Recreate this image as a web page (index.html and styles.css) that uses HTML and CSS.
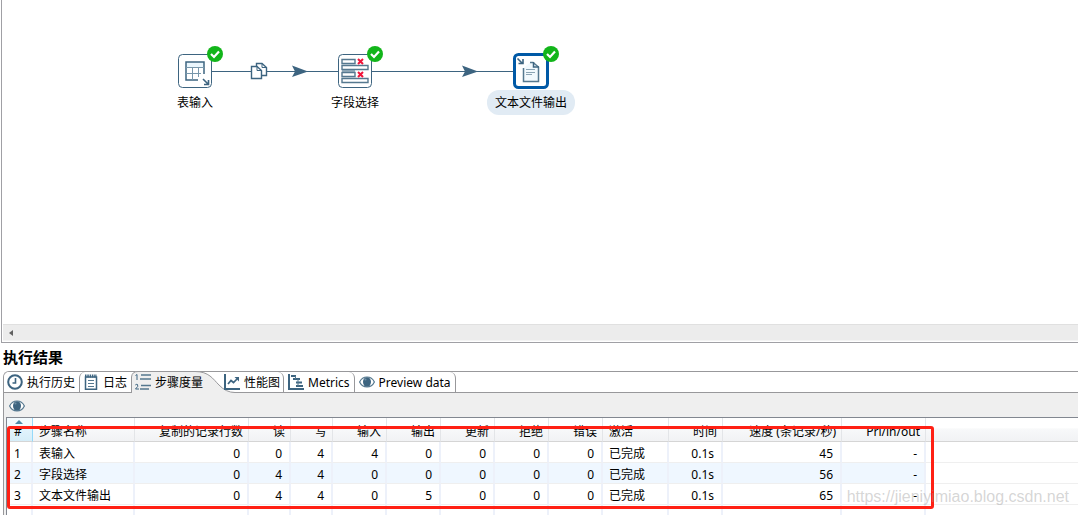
FILE: index.html
```html
<!DOCTYPE html>
<html lang="zh-CN">
<head>
<meta charset="utf-8">
<title>执行结果</title>
<link rel="stylesheet" href="styles.css">
</head>
<body>
<main class="canvas">
  <div class="stage">
    <svg class="hops" width="600" height="120" viewBox="0 0 600 120" aria-hidden="true">
      <path d="M212 71.500H338M372 71.500H514" fill="none" stroke="#3d6480"/>
      <path d="M292 65.500L308 71.500L292 77L295 71.500ZM462 65.500L478 71.500L462 77L465 71.500Z" fill="#3d6480"/>
      <path d="M256.500 63.500H262L266.500 67.500V75.500H256.500Z" fill="#fff" stroke="#3d6480" stroke-width="1.400"/>
      <path d="M251.500 66.500H257L261.500 70.500V78.500H251.500Z" fill="#fff" stroke="#3d6480" stroke-width="1.400"/>
      <path d="M257 66.500V70.500H261.500M262 63.500V67.500H266.500" fill="none" stroke="#3d6480"/>
    </svg>

    <div class="node node-input">
      <svg class="node-icon" viewBox="0 0 36 36">
        <rect x="1.500" y="1.500" width="33" height="33" rx="4" fill="#fff" stroke="#3d6480"/>
        <path d="M9 9H27V14H9Z" fill="#eaf6fd"/>
        <path d="M21 27H9V9H27V21" fill="none" stroke="#3d6480" stroke-width="1.500"/>
        <path d="M9 14.500H27M9 20.500H24M15.500 14V27M21.500 14V24" fill="none" stroke="#7897ab"/>
        <path d="M26 26L31 31M31.500 27V31.500H27" fill="none" stroke="#3d6480" stroke-width="1.600"/>
      </svg>
      <svg class="node-ok" viewBox="0 0 16 16"><circle cx="8" cy="8" r="8" fill="#12b51a"/><path d="M4 8L7 11L12 5.500" fill="none" stroke="#fff" stroke-width="2.200"/></svg>
      <span class="node-label">表输入</span>
    </div>

    <div class="node node-select">
      <svg class="node-icon" viewBox="0 0 36 36">
        <rect x="1.500" y="1.500" width="33" height="33" rx="4" fill="#fff" stroke="#3d6480"/>
        <path d="M5 6.500H18V10.500H5ZM5 12.500H31V16.500H5ZM5 19.500H18V23.500H5ZM5 25.500H31V29.500H5Z" fill="#fff" stroke="#55788f" stroke-width="1.400"/>
        <path d="M5 18H18" stroke="#8ba4b4" stroke-width="2"/>
        <path d="M21 6L26 11M26 6L21 11M21 19L26 24M26 19L21 24" stroke="#f0143a" stroke-width="2"/>
      </svg>
      <svg class="node-ok" viewBox="0 0 16 16"><circle cx="8" cy="8" r="8" fill="#12b51a"/><path d="M4 8L7 11L12 5.500" fill="none" stroke="#fff" stroke-width="2.200"/></svg>
      <span class="node-label">字段选择</span>
    </div>

    <div class="node node-output">
      <svg class="node-icon" viewBox="0 0 36 36">
        <rect x="1.500" y="1.500" width="33" height="33" rx="4" fill="#fff" stroke="#0059a6" stroke-width="3"/>
        <path d="M10.500 15V28.500H25.500V14L20 9.500H17" fill="#f2f9fd" stroke="#55788f" stroke-width="1.500"/>
        <path d="M20.500 9V14H26" fill="none" stroke="#3d6480" stroke-width="1.500"/>
        <path d="M13 16.500H22M13 19.500H22M13 21.500H19" stroke="#8ba4b4"/>
        <path d="M4.500 5.500L9 10M10 6V10.500H5.500" fill="none" stroke="#3d6480" stroke-width="1.600"/>
      </svg>
      <svg class="node-ok" viewBox="0 0 16 16"><circle cx="8" cy="8" r="8" fill="#12b51a"/><path d="M4 8L7 11L12 5.500" fill="none" stroke="#fff" stroke-width="2.200"/></svg>
      <span class="node-label node-label-active">文本文件输出</span>
    </div>
  </div>
  <div class="scrollbar">
    <button class="scroll-left" type="button" aria-label="向左滚动"><svg width="4" height="6" viewBox="0 0 4 6"><path d="M4 0V6L0 3Z" fill="#606060"/></svg></button>
  </div>
</main>

<section class="results">
  <h1 class="results-title">执行结果</h1>
  <div class="panel">
    <div class="tabs" role="tablist">
      <button class="tab tab-history" role="tab" type="button">
        <svg class="icon" viewBox="0 0 16 16"><circle cx="8" cy="8" r="6.800" fill="none" stroke="#3d6480" stroke-width="2"/><path d="M8.500 4V9H5.500" fill="none" stroke="#3d6480" stroke-width="1.600"/></svg><span class="tab-text">执行历史</span></button>
      <button class="tab tab-log" role="tab" type="button">
        <svg class="icon" viewBox="0 0 16 16"><path d="M2.500 3H13.500V15.200H2.500Z" fill="#fff" stroke="#3d6480" stroke-width="1.500"/><path d="M2 2H14" stroke="#3d6480" stroke-width="3" stroke-dasharray="1.500 .8"/><path d="M5 6.500H11M5 9.500H11M5 12.500H11" stroke="#55788f" stroke-width="1.200"/></svg><span class="tab-text">日志</span></button>
      <button class="tab tab-metrics" role="tab" type="button" aria-selected="true">
        <svg class="tab-shape" width="104" height="22" viewBox="0 0 104 22"><path d="M.5 22V6Q1 .5 7 .5H64C78 .5 82 8 88 14Q95 21.500 104 21.500V22Z" fill="#efefef"/><path d="M.5 22V6Q1 .5 7 .5H64C78 .5 82 8 88 14Q95 21.500 104 21.500" fill="none" stroke="#98989b"/></svg>
        <svg class="icon" viewBox="0 0 16 16"><path d="M.5 1.500L2 .5V6M.3 11Q1 10 2.500 10.500Q4 12 .5 15H4" fill="none" stroke="#3d6480"/><path d="M6 1H16M5 5H16M6 11.500H16M5 15H14" stroke="#55788f" stroke-width="1.400"/></svg><span class="tab-text">步骤度量</span></button>
      <button class="tab tab-perf" role="tab" type="button">
        <svg class="icon" viewBox="0 0 16 16"><path d="M1 0V15H16" fill="none" stroke="#3d6480" stroke-width="2"/><path d="M4 10L7 6.500L9.500 8.500L13 5" fill="none" stroke="#3d6480" stroke-width="1.700"/><path d="M10.500 3H15V7.500Z" fill="#3d6480"/></svg><span class="tab-text">性能图</span></button>
      <button class="tab tab-gantt" role="tab" type="button">
        <svg class="icon" viewBox="0 0 16 16"><path d="M1 0V15H16" fill="none" stroke="#3d6480" stroke-width="2"/><path d="M3 2H8M5 5H12M8 8.500H14M8 12H15" stroke="#3d6480" stroke-width="2"/><path d="M7.500 2V5M10 5V12" stroke="#55788f"/></svg><span class="tab-text">Metrics</span></button>
      <button class="tab tab-preview" role="tab" type="button">
        <svg class="icon" viewBox="0 0 16 16"><path d="M.6 8Q3 3 8 3T15.400 8Q13 13 8 13T.6 8Z" fill="#fff" stroke="#55788f" stroke-width="1.200"/><ellipse cx="8" cy="8" rx="4" ry="4.800" fill="#3d6480"/><circle cx="6.500" cy="5.500" r="1" fill="#6f8fa4"/></svg><span class="tab-text">Preview data</span></button>
    </div>
    <div class="toolbar">
      <button class="tool" type="button" aria-label="Preview"><svg class="icon" viewBox="0 0 16 16"><path d="M.6 8Q3 3 8 3T15.400 8Q13 13 8 13T.6 8Z" fill="#fff" stroke="#55788f" stroke-width="1.200"/><ellipse cx="8" cy="8" rx="4" ry="4.800" fill="#3d6480"/><circle cx="6.500" cy="5.500" r="1" fill="#6f8fa4"/></svg></button>
    </div>
    <div class="grid">
      <table class="steps">
        <colgroup><col class="w-index"><col class="w-name"><col class="w-copy"><col class="w-small"><col class="w-small"><col class="w-mid"><col class="w-mid"><col class="w-mid"><col class="w-mid"><col class="w-mid"><col class="w-state"><col class="w-mid"><col class="w-speed"><col class="w-pri"><col></colgroup>
        <thead><tr><th class="left sorted">#</th><th class="left">步骤名称</th><th>复制的记录行数</th><th>读</th><th>写</th><th>输入</th><th>输出</th><th>更新</th><th>拒绝</th><th>错误</th><th class="left">激活</th><th>时间</th><th>速度 (条记录/秒)</th><th>Pri/in/out</th><th class="rest"></th></tr></thead>
        <tbody>
          <tr><td class="left">1</td><td class="left">表输入</td><td>0</td><td>0</td><td>4</td><td>4</td><td>0</td><td>0</td><td>0</td><td>0</td><td class="left">已完成</td><td>0.1s</td><td>45</td><td>-</td><td class="rest"></td></tr>
          <tr><td class="left">2</td><td class="left">字段选择</td><td>0</td><td>4</td><td>4</td><td>0</td><td>0</td><td>0</td><td>0</td><td>0</td><td class="left">已完成</td><td>0.1s</td><td>56</td><td>-</td><td class="rest"></td></tr>
          <tr><td class="left">3</td><td class="left">文本文件输出</td><td>0</td><td>4</td><td>4</td><td>0</td><td>5</td><td>0</td><td>0</td><td>0</td><td class="left">已完成</td><td>0.1s</td><td>65</td><td>-</td><td class="rest"></td></tr>
          <tr class="spare"><td></td><td></td><td></td><td></td><td></td><td></td><td></td><td></td><td></td><td></td><td></td><td></td><td></td><td></td><td class="rest"></td></tr>
        </tbody>
      </table>
      <div class="highlight"></div>
      <span class="watermark">https://jieniyimiao.blog.csdn.net</span>
    </div>
  </div>
</section>
</body>
</html>
```
FILE: styles.css
```css
* { box-sizing: border-box; }

body {
  margin: 0;
  min-height: 100vh;
  display: flex;
  flex-direction: column;
  background: #fff;
  color: #000;
  font: 12px/16px "Noto Sans", "Noto Sans CJK SC", sans-serif;
}

button {
  margin: 0;
  padding: 0;
  border: 0;
  background: none;
  color: inherit;
  font: inherit;
}

/* Transformation canvas */
.canvas {
  flex: 1;
  display: flex;
  flex-direction: column;
  margin-left: 1px;
  border-left: 1px solid #a0a0a5;
  border-bottom: 1px solid #a0a0a5;
}

.stage {
  position: relative;
  flex: 1;
  min-height: 120px;
  margin-left: -2px;
}

.hops {
  position: absolute;
  left: 0;
  top: 0;
}

.node {
  position: absolute;
  top: 53px;
  width: 36px;
  display: flex;
  flex-direction: column;
  align-items: center;
}

.node-input { left: 177px; }
.node-select { left: 337px; }
.node-output { left: 513px; }

.node-icon {
  width: 36px;
  height: 36px;
}

.node-ok {
  position: absolute;
  top: -7px;
  left: 30px;
  width: 16px;
  height: 16px;
}

.node-label {
  margin-top: 1px;
  padding: 5px 8px 4px;
  border-radius: 12px;
  white-space: nowrap;
}

.node-label-active { background: #e1ebf4; }

.scrollbar {
  display: flex;
  align-items: center;
  height: 17px;
  margin: 0 0 1px 1px;
  padding-left: 6px;
  background: #ececec;
  border-top: 1px solid #e0e0e0;
  border-bottom: 1px solid #f4f4f4;
}

.scroll-left {
  display: flex;
}

/* Results */
.results-title {
  margin: 0;
  padding: 4px 3px;
  font-size: 15px;
  line-height: 20px;
  font-weight: bold;
}

.panel {
  margin-left: 3px;
  border-left: 1px solid #98989b;
  border-top: 1px solid #98989b;
  border-top-left-radius: 6px;
  background: #efefef;
}

.tabs {
  display: flex;
  height: 21px;
  background: #fff;
  border-top-left-radius: 5px;
  border-bottom: 1px solid #98989b;
}

.tab {
  position: relative;
  display: flex;
  align-items: center;
  gap: 4px;
  height: 20px;
  padding: 0 4px;
  white-space: nowrap;
}

.tab-text {
  z-index: 1;
  padding-top: 2px;
}

.icon {
  flex: none;
  z-index: 1;
  width: 16px;
  height: 16px;
}

.tab-history { padding-left: 3px; }

.tab-log {
  border-left: 1px solid #98989b;
  border-top-left-radius: 6px;
  padding-left: 3px;
}

.tab-metrics {
  z-index: 1;
  padding-right: 20px;
}

.tab-shape {
  position: absolute;
  left: 0;
  top: -1px;
}

.tab-perf,
.tab-gantt,
.tab-preview {
  border-right: 1px solid #98989b;
  border-top-right-radius: 6px;
}

.tab-perf {
  z-index: 2;
  padding-left: 1px;
  padding-right: 3px;
}

.toolbar {
  display: flex;
  align-items: center;
  height: 24px;
  padding: 2px 5px 0;
}

.tool { display: flex; }

.grid {
  position: relative;
  margin-left: 2px;
  border-left: 1px solid #828790;
  border-top: 1px solid #828790;
  background: #fff;
}

.steps {
  width: 100%;
  table-layout: fixed;
  border-collapse: separate;
  border-spacing: 0;
}

.w-index { width: 26px; }
.w-name { width: 102px; }
.w-copy { width: 114px; }
.w-small { width: 42px; }
.w-mid { width: 54px; }
.w-state { width: 66px; }
.w-speed { width: 119px; }
.w-pri { width: 84px; }

.steps th,
.steps td {
  text-align: right;
  white-space: nowrap;
  font-weight: normal;
}

.steps th {
  height: 24px;
  padding: 5px 5px 0 0;
  background: linear-gradient(#fff 45%, #f8f9fa 46%, #f1f2f4);
  border-right: 1px solid #e3e5e8;
  border-bottom: 1px solid #d5d5d5;
}

.steps td {
  height: 21px;
  padding: 4px 7px 0 0;
  border-right: 2px solid #edf1fa;
  border-bottom: 1px solid #efefef;
}

.steps .left {
  padding-left: 6px;
  padding-right: 0;
  text-align: left;
}

.steps .left:first-child { padding-left: 7px; }

.steps .rest { border-right: 0; }

.steps tr:nth-child(2) td:not(.rest) { background: #eff7ff; }

.steps .spare td {
  height: 10px;
  padding: 0;
  border-bottom: 0;
}

.steps .sorted {
  position: relative;
  background: linear-gradient(#f2fafe 45%, #e2f3fc 46%, #d6edf8);
  border-right-color: #96d9f9;
}

.sorted::before {
  content: "";
  position: absolute;
  top: 2px;
  left: 8px;
  border: 4px solid transparent;
  border-top: 0;
  border-bottom-color: #4d89a8;
}

/* Annotation frame around the metrics */
.highlight {
  position: absolute;
  top: 8px;
  left: 0;
  width: 927px;
  bottom: 6px;
  border: 3px solid #ff2014;
  border-radius: 3px;
}

.watermark {
  position: absolute;
  right: 9px;
  bottom: 8px;
  color: rgba(150, 150, 150, 0.4);
  font: 16px/20px "Liberation Sans", Arial, sans-serif;
}
```
